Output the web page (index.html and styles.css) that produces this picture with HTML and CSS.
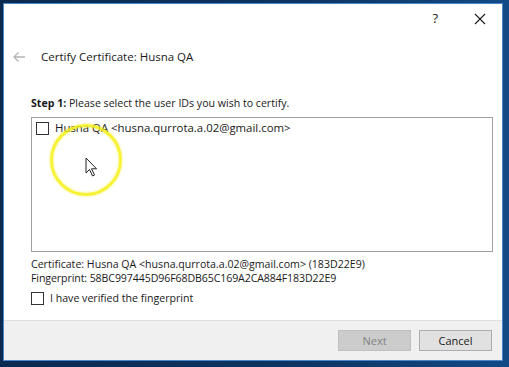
FILE: index.html
```html
<!DOCTYPE html>
<html lang="en">
<head>
    <meta charset="UTF-8">
    <title>Certify Certificate</title>
    <link rel="stylesheet" href="styles.css">
</head>
<body>

    <div class="window">
        <div class="titlebar">
            <span class="help">?</span>
            <svg class="close" width="12" height="12" viewBox="0 0 12 12">
                <path d="M1 1 L11 11 M11 1 L1 11" stroke="#1a1a1a" stroke-width="1.1" fill="none"/>
            </svg>
        </div>

        <div class="header">
            <svg class="back" width="14" height="12" viewBox="0 0 14 12">
                <path d="M13 6 H2 M6.5 1.5 L2 6 L6.5 10.5" stroke="#b4b4b4" stroke-width="1.3" fill="none"/>
            </svg>
            <span class="title">Certify Certificate: Husna QA</span>
        </div>

        <div class="content">
            <p class="step"><b>Step 1:</b> Please select the user IDs you wish to certify.</p>

            <div class="uid-list">
                <label class="check uid">
                    <span class="box"></span>
                    Husna QA &lt;husna.qurrota.a.02@gmail.com&gt;
                </label>

                <!-- cursor highlight from the screen recorder -->
                <div class="highlight"></div>
                <svg class="cursor" width="13" height="21" viewBox="0 0 13 21">
                    <path d="M1 1 V16 L4.5 12.5 L7.5 19 L9.5 18 L6.5 11.8 L11.5 11.8 Z" fill="#fff" stroke="#222" stroke-width="1"/>
                </svg>
            </div>

            <div class="cert-info">
                <div>Certificate: Husna QA &lt;husna.qurrota.a.02@gmail.com&gt; (183D22E9)</div>
                <div class="fpr">Fingerprint: 58BC997445D96F68DB65C169A2CA884F183D22E9</div>
            </div>

            <label class="check verify">
                <span class="box"></span>
                I have verified the fingerprint
            </label>
        </div>

        <div class="footer">
            <button class="btn" disabled>Next</button>
            <button class="btn">Cancel</button>
        </div>
    </div>

</body>
</html>
```

FILE: styles.css
```css
:root {
    --text: #1a1a1a;
    --frame: #f0f0f0;
    --list-border: #a0a0a0;
}

body {
    margin: 0;
    width: 509px;
    height: 367px;
    overflow: hidden;
    background: linear-gradient(90deg, #0a2a50 0%, #0d3563 60%, #124a86 100%);
    font-family: "Open Sans", "Noto Sans", sans-serif;
    font-size: 10.6px;
    color: var(--text);
}

.window {
    margin: 3px 0 0 3px;
    width: 500px;
    height: 358px;
    border: 1px solid #4a86c8;
    background: #fff;
    display: flex;
    flex-direction: column;
    box-sizing: border-box;
}

.titlebar {
    height: 30px;
    display: flex;
    align-items: center;
    justify-content: flex-end;
    gap: 36px;
    padding-right: 16px;
}

.help {
    font-size: 13px;
    margin-top: -2px;
}

.header {
    height: 47px;
    display: flex;
    align-items: center;
    padding-left: 8px;
}

.back {
    margin-right: 15px;
    margin-top: -2px;
}

.title {
    font-size: 11.5px;
    margin-top: -2px;
}

.content {
    flex: 1;
    padding: 0 9px 0 27px;
}

.step {
    margin: 15px 0 6px;
    line-height: 15px;
}

.uid-list {
    position: relative;
    height: 135px;
    border: 1px solid var(--list-border);
    box-sizing: border-box;
    padding: 3px 4px;
}

.check {
    display: flex;
    align-items: center;
    gap: 6px;
    line-height: 14px;
}

.uid {
    font-size: 11.4px;
}

.box {
    width: 11px;
    height: 11px;
    border: 1px solid #333;
    background: #fff;
    flex-shrink: 0;
}

.highlight {
    position: absolute;
    left: 18px;
    top: 6px;
    width: 66px;
    height: 66px;
    border: 3px solid rgba(245, 240, 20, 0.85);
    border-radius: 50%;
    box-shadow: 0 0 3px rgba(245, 240, 20, 0.6), inset 0 0 3px rgba(245, 240, 20, 0.6);
}

.cursor {
    position: absolute;
    left: 53px;
    top: 39px;
}

.cert-info {
    margin-top: 5px;
    line-height: 14px;
}

.fpr {
    letter-spacing: -0.1px;
}

.verify {
    margin-top: 6px;
}

.footer {
    height: 40px;
    border-top: 1px solid #dfdfdf;
    background: var(--frame);
    display: flex;
    justify-content: flex-end;
    align-items: flex-start;
    gap: 8px;
    padding: 9px 10px 0 0;
    box-sizing: border-box;
}

.btn {
    width: 73px;
    height: 21px;
    font-family: inherit;
    font-size: 11px;
    color: var(--text);
    background: #e1e1e1;
    border: 1px solid #adadad;
    padding: 0;
}

.btn:disabled {
    background: #cccccc;
    border-color: #bfbfbf;
    color: #838383;
}
```
